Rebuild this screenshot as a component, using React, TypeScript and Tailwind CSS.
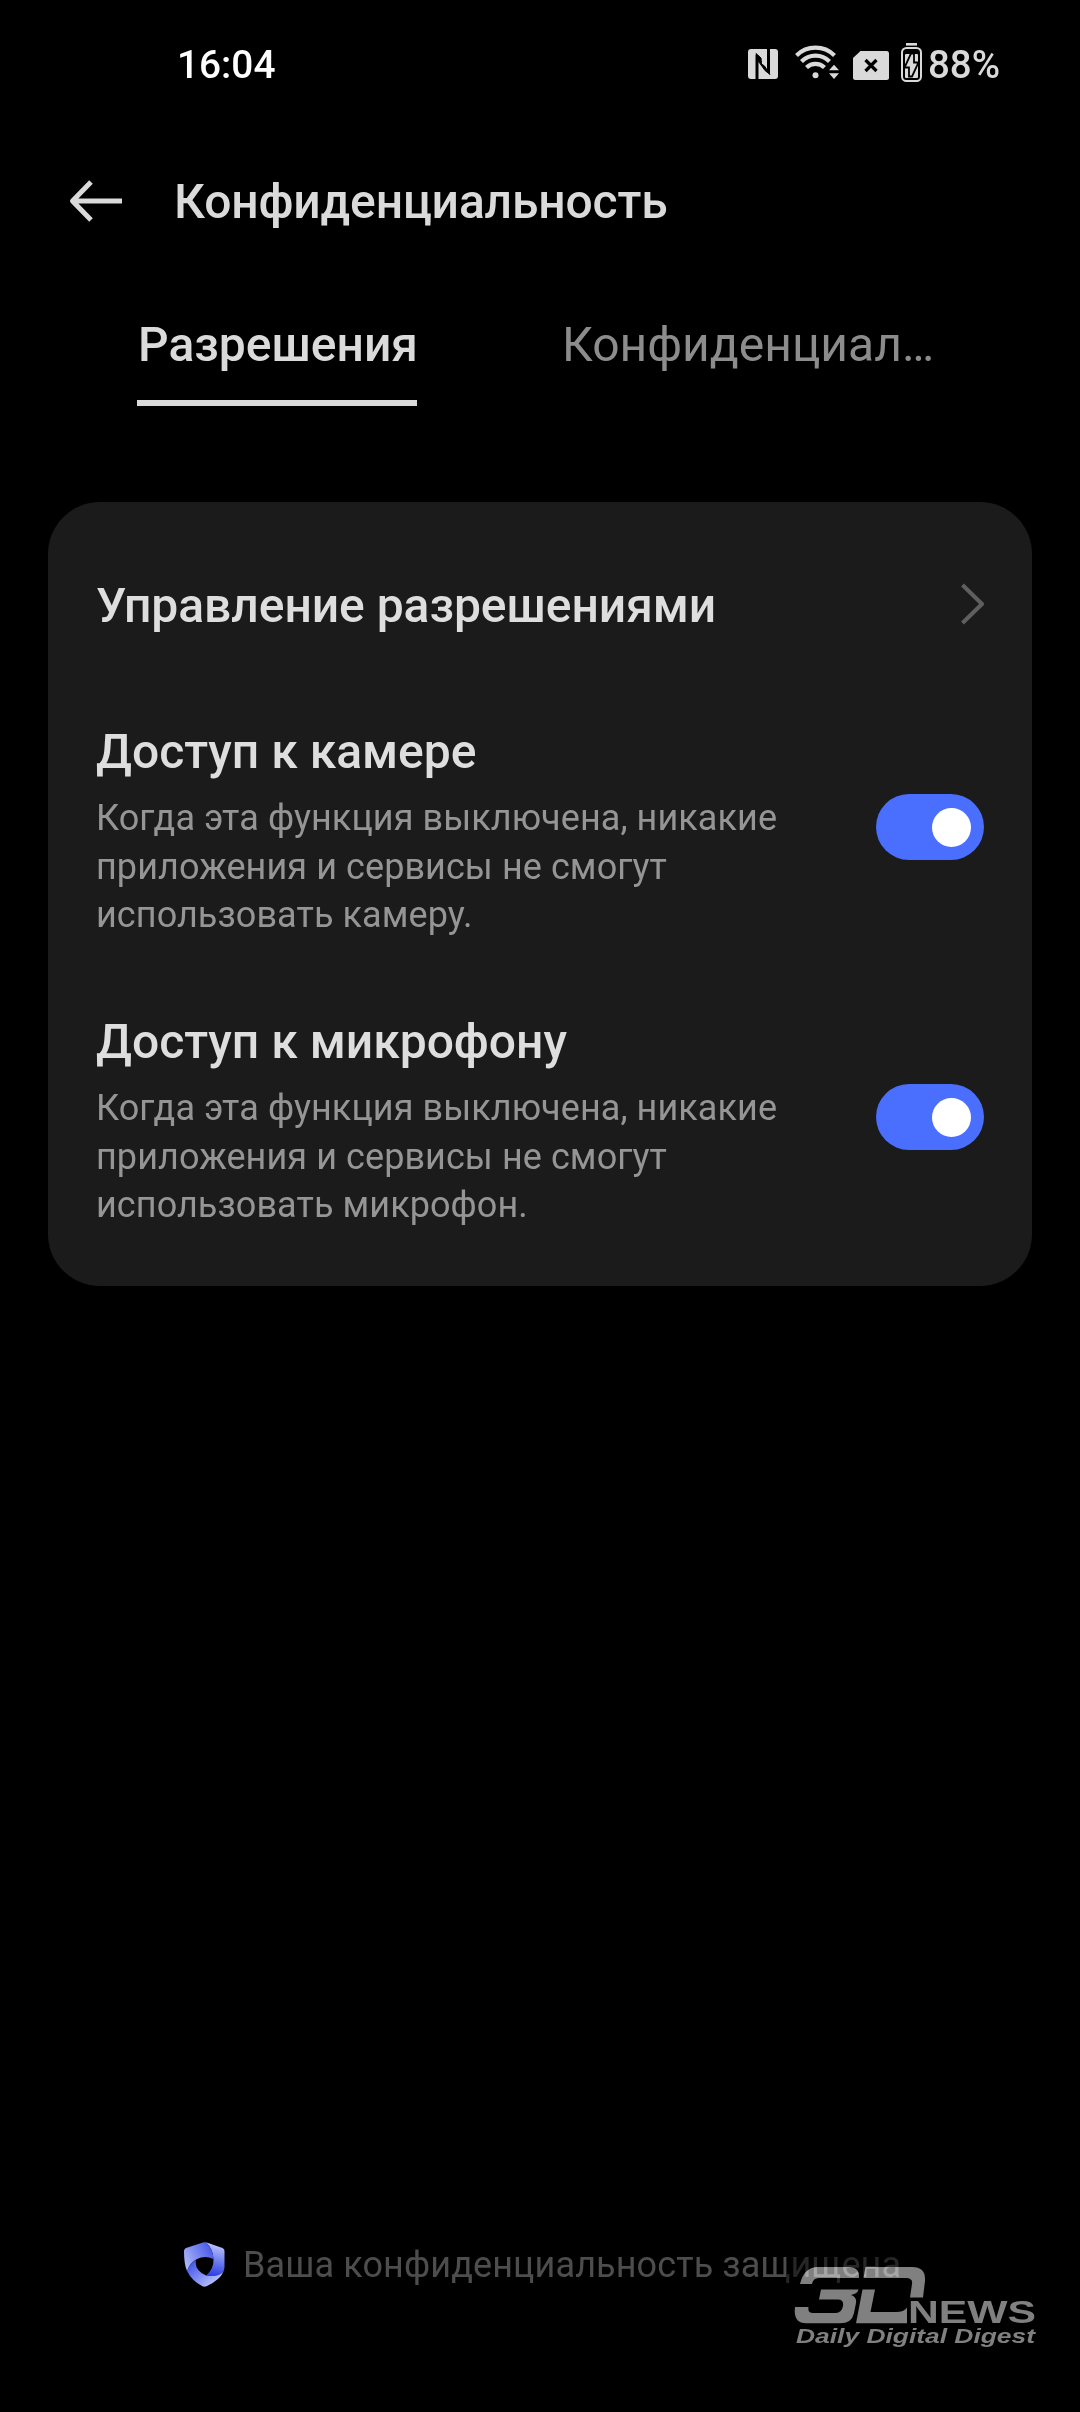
import { useState, type ReactNode } from "react";

const permissions = [
  {
    id: "camera",
    title: "Доступ к камере",
    lines: ["Когда эта функция выключена, никакие", "приложения и сервисы не смогут", "использовать камеру."],
  },
  {
    id: "mic",
    title: "Доступ к микрофону",
    lines: ["Когда эта функция выключена, никакие", "приложения и сервисы не смогут", "использовать микрофон."],
  },
];

function NfcIcon() {
  return (
    <svg className="h-[30px] w-[30px]" viewBox="0 0 30 30" fill="none">
      <rect width="30" height="30" rx="3" fill="#dadada" />
      <path d="M9 30V6M20.500 0V24" stroke="#000" strokeWidth="3" />
      <path d="M8 4.500L13 9L13.500 15L16.500 17L22 25.500L17 21.500L12 14.500L10 12Z" fill="#000" stroke="#000" strokeWidth="1" />
    </svg>
  );
}

function WifiIcon() {
  return (
    <svg className="h-[36px] w-[44px]" viewBox="0 0 44 36" fill="none">
      <g stroke="#dadada" strokeWidth="4.200">
        <path d="M1.500 11.500A27 27 0 0 1 39.500 11.500" />
        <path d="M6.500 17.500A19.500 19.500 0 0 1 34.500 17.500" />
        <path d="M11.500 23.500A12.800 12.800 0 0 1 29.500 23.500" />
      </g>
      <circle cx="20.500" cy="31.300" r="3" fill="#dadada" />
      <path d="M33 26.500L39 20.500L45 26.500ZM33 29.500H45L39 35Z" stroke="#000" strokeWidth="3" />
      <path d="M34 26.300L39 20.800L44 26.300ZM34 29.300H44L39 35Z" fill="#dadada" />
    </svg>
  );
}

function SimIcon() {
  return (
    <svg className="h-[29px] w-[36px]" viewBox="0 0 36 29" fill="none">
      <path d="M7.500 0H33.500A2.500 2.500 0 0 1 36 2.500V26.500A2.500 2.500 0 0 1 33.500 29H2.500A2.500 2.500 0 0 1 0 26.500V7Z" fill="#dadada" />
      <path d="M12.500 9L23.500 20M23.500 9L12.500 20" stroke="#000" strokeWidth="3.200" />
    </svg>
  );
}

function BatteryIcon() {
  return (
    <svg className="h-[39px] w-[21px]" viewBox="0 0 21 39" fill="none">
      <rect x="5" width="11" height="2.600" fill="#dadada" />
      <rect x="1" y="5" width="19" height="33" rx="4.500" stroke="#dadada" strokeWidth="2" />
      <rect x="4" y="11" width="13" height="24" rx="1" fill="#dadada" />
      <path d="M10 10.500L3.500 24.500H8V33.500H11L17.500 19.500H13V10.500Z" stroke="#000" strokeWidth="1.800" fill="#dadada" />
    </svg>
  );
}

function ShieldIcon() {
  return (
    <svg className="mt-[2px] h-[45px] w-[41px]" viewBox="0 0 41 45">
      <defs>
        <linearGradient id="shieldTop" x1="0" y1="24" x2="30" y2="8" gradientUnits="userSpaceOnUse">
          <stop stopColor="#b3bdfb" />
          <stop offset="1" stopColor="#4455e8" />
        </linearGradient>
        <linearGradient id="shieldRight" x1="36" y1="3" x2="30" y2="34" gradientUnits="userSpaceOnUse">
          <stop stopColor="#b9c2fc" />
          <stop offset="1" stopColor="#2b3fe4" />
        </linearGradient>
        <linearGradient id="shieldLeft" x1="5" y1="20" x2="26" y2="43" gradientUnits="userSpaceOnUse">
          <stop stopColor="#3d50e8" />
          <stop offset="1" stopColor="#b0bafb" />
        </linearGradient>
      </defs>
      <path d="M22 .3L38.500 6Q40.500 7 40.500 9V25Q40.500 27 39.500 29.500Q34 35.500 22 33.500Q30 27 29.500 17Q29 7 22 .3Z" fill="url(#shieldRight)" />
      <path d="M3 29Q0 22 0 9Q0 7 2 6L19 .4Q20.500 0 22 .3Q29 7 29.500 17Q21 13 13 17Q6 20.500 3 29Z" fill="url(#shieldTop)" />
      <path d="M3 29Q6 20.500 12 18Q10 28 22 33.500Q34 35.500 39.500 29.500Q36 38 22.500 44.300Q20.500 45.200 18.500 44.300Q8 39 3 29Z" fill="url(#shieldLeft)" />
    </svg>
  );
}

function StatusBar() {
  return (
    <div className="flex h-[130px] items-center justify-between pl-[177px] pr-[80px] text-[39px] leading-none">
      <span className="text-[38.800px] font-medium text-white">16:04</span>
      <div className="flex items-center text-[#dadada]">
        <div className="-mt-[2px]">
          <NfcIcon />
        </div>
        <div className="-mt-1.5 ml-[17px]">
          <WifiIcon />
        </div>
        <div className="ml-[14px]">
          <SimIcon />
        </div>
        <div className="-mt-1.5 ml-3">
          <BatteryIcon />
        </div>
        <span className="ml-[6px] text-[38.500px] font-medium">88%</span>
      </div>
    </div>
  );
}

function Tab({ active, onClick, children }: { active: boolean; onClick: () => void; children: ReactNode }) {
  return (
    <button
      onClick={onClick}
      className={
        active
          ? "h-[106px] w-[280px] whitespace-nowrap border-b-6 border-[#dadada] pb-[10px] pl-px text-left font-medium text-[#dadada]"
          : "h-[106px] whitespace-nowrap border-b-6 border-transparent pb-[10px] pl-px text-left text-[#8c8c8c]"
      }
    >
      {children}
    </button>
  );
}

function Toggle({ on, onClick }: { on: boolean; onClick: () => void }) {
  return (
    <button
      role="switch"
      aria-checked={on}
      onClick={onClick}
      className={
        on
          ? "flex h-[66px] w-[108px] items-center justify-end rounded-full bg-[#4a6fff] px-[13px]"
          : "flex h-[66px] w-[108px] items-center justify-start rounded-full bg-[#4d4d4d] px-[13px]"
      }
    >
      <span className="h-[39px] w-[39px] rounded-full bg-white" />
    </button>
  );
}

function Watermark() {
  return (
    <>
      <div className="absolute left-[786px] top-[2232px] h-[130px] w-[254px] bg-black/50" />
      <svg className="absolute left-[794px] top-[2266px] h-[86px] w-[244px] mix-blend-plus-lighter" viewBox="0 0 244 86" fill="#808080">
        <path d="M6 18Q10 1 24 1H54Q66 1 65 12H25Q19 12 18 18Z" />
        <path d="M27 23.500H64.500Q64 27.500 57 29Q63 31 62 37L60 47Q58 57.300 46 57.300H12Q-1 57.300 1 41H14.500Q13.500 47 19 47H42Q47.500 47 49 40Q50 33.500 44 33.500H25Z" />
        <path d="M71.500 1H118Q132 1 131 15L129 31.500H116L118 18Q119 12 112 12H69.500Z" />
        <path d="M68.500 23.500H81L76.500 46H102Q110 46 113 41.500V57.300H62Z" />
        <text x="114" y="57.300" textLength="128" lengthAdjust="spacingAndGlyphs" className="font-[Liberation_Sans] text-[32px] font-bold">NEWS</text>
        <text x="2" y="76.700" textLength="239" lengthAdjust="spacingAndGlyphs" className="font-[Liberation_Sans] text-[20px] font-bold italic">Daily Digital Digest</text>
      </svg>
    </>
  );
}

export default function App() {
  const [tab, setTab] = useState(0);
  const [enabled, setEnabled] = useState<Record<string, boolean>>({ camera: true, mic: true });

  return (
    <div className="relative flex h-[2412px] w-[1080px] flex-col overflow-hidden bg-black font-[Roboto,sans-serif]">
      <StatusBar />

      {/* Header */}
      <header className="flex h-[142px] items-center gap-[51px] pl-[69px]">
        <svg className="h-[42px] w-[54px]" viewBox="0 0 54 42" fill="none" stroke="#dadada" strokeWidth="5">
          <path d="M53 21H4M22 2L3.500 21L22 40" strokeLinejoin="round" />
        </svg>
        <h1 className="pt-[2px] text-[48px] font-medium leading-none tracking-[-0.150px] text-[#dadada]">Конфиденциальность</h1>
      </header>

      {/* Tabs */}
      <div className="mt-[28px] flex gap-[144px] pl-[137px] text-[48px] leading-[90px]">
        <Tab active={tab === 0} onClick={() => setTab(0)}>Разрешения</Tab>
        <Tab active={tab === 1} onClick={() => setTab(1)}>Конфиденциал…</Tab>
      </div>

      {/* Permissions */}
      <main className="mx-12 mt-[96px] h-[784px] rounded-[52px] bg-[#1b1b1b] px-12 pt-[29px]">
        <button className="mb-[5px] flex h-[146px] w-full items-center justify-between text-left">
          <span className="pt-[4px] text-[48px] font-medium leading-none tracking-[-0.050px] text-[#dedede]">Управление разрешениями</span>
          <svg className="h-[42px] w-6" viewBox="0 0 24 42" fill="none" stroke="#5f5f5f" strokeWidth="4">
            <path d="M2.500 2L22 21L2.500 40" strokeLinejoin="round" />
          </svg>
        </button>
        {permissions.map((item) => (
          <div key={item.id} className="flex h-[290px] items-center justify-between">
            <div className="pt-[10px]">
              <h2 className="text-[48px] font-medium leading-[56px] text-[#dedede]">{item.title}</h2>
              <p className="mt-[14px] whitespace-nowrap text-[36px] leading-[48.600px] tracking-[0.080px] text-[#959595]">
                {item.lines.map((line) => (
                  <span key={line} className="block">{line}</span>
                ))}
              </p>
            </div>
            <Toggle
              on={enabled[item.id]}
              onClick={() => setEnabled({ ...enabled, [item.id]: !enabled[item.id] })}
            />
          </div>
        ))}
      </main>

      {/* Footer */}
      <footer className="mb-[125px] mt-auto flex items-center gap-[18.500px] pl-[183.500px]">
        <ShieldIcon />
        <span className="pt-[2px] text-[36px] leading-[42px] tracking-[0.120px] text-[#4d4d4d]">Ваша конфиденциальность защищена</span>
      </footer>

      <Watermark />
    </div>
  );
}
